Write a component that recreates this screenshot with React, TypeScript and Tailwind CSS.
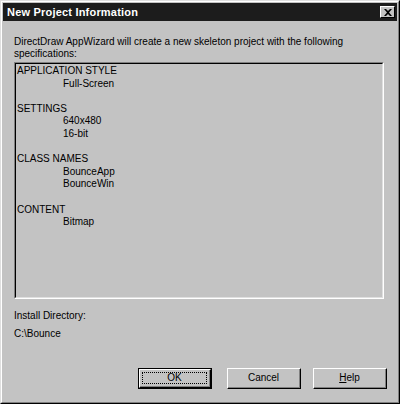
import React from 'react';

const sections = [
  { label: 'APPLICATION STYLE', items: ['Full-Screen'] },
  { label: 'SETTINGS', items: ['640x480', '16-bit'] },
  { label: 'CLASS NAMES', items: ['BounceApp', 'BounceWin'] },
  { label: 'CONTENT', items: ['Bitmap'] },
];

const Win95Button: React.FC<{ isDefault?: boolean; children: React.ReactNode }> = ({ isDefault, children }) => (
  <div className={`w-[74px] h-[21px] ${isDefault ? 'border border-black' : ''}`}>
    <div className="w-full h-full border-t border-l border-t-white border-l-white border-r border-b border-r-black border-b-black">
      <div className="relative w-full h-full border-r border-b border-r-[#808080] border-b-[#808080] flex items-center justify-center">
        {isDefault && <div className="absolute inset-[2px] border border-dotted border-black" />}
        <span>{children}</span>
      </div>
    </div>
  </div>
);

export default function App() {
  return (
    <div
      className="w-[400px] h-[404px] bg-[#c3c3c3] border-t border-l border-t-[#dfdfdf] border-l-[#dfdfdf] border-r border-b border-r-black border-b-black text-black text-[10px] leading-[12px]"
      style={{ fontFamily: '"Liberation Sans", Arial, sans-serif' }}
    >
      <div className="w-full h-full border-t border-l border-t-white border-l-white border-r border-b border-r-[#808080] border-b-[#808080] p-px flex flex-col">
        {/* Title bar */}
        <div className="h-[18px] bg-[#1c1c1c] flex items-center justify-between pl-[4px] pr-[2px]">
          <span className="text-white font-bold text-[11px] tracking-[0.2px]">New Project Information</span>
          <div className="w-[15px] h-[12px] bg-[#c3c3c3] border-t border-l border-t-white border-l-white border-r border-b border-r-black border-b-black flex items-center justify-center">
            <svg width="8" height="7" viewBox="0 0 8 7">
              <path d="M0 0h2l2 2 2-2h2L5 3.5 8 7H6L4 5 2 7H0l3-3.5z" fill="black" />
            </svg>
          </div>
        </div>

        {/* Body */}
        <div className="flex flex-col pl-[11px] pr-[10px] pt-[15px]">
          <p>
            DirectDraw AppWizard will create a new skeleton project with the following
            <br />
            specifications:
          </p>

          <div className="mt-[2px] w-[370px] h-[237px] border-t border-l border-t-[#808080] border-l-[#808080] border-r border-b border-r-white border-b-white">
            <div className="w-full h-full border-t border-l border-t-black border-l-black border-r border-b border-r-[#dfdfdf] border-b-[#dfdfdf] pl-[1px] pt-px leading-[12.6px]">
              {sections.map((s, i) => (
                <div key={s.label} className={i > 0 ? 'mt-[12.6px]' : ''}>
                  <div>{s.label}</div>
                  {s.items.map((it) => (
                    <div key={it} className="pl-[46px]">{it}</div>
                  ))}
                </div>
              ))}
            </div>
          </div>

          <div className="mt-[11px]">Install Directory:</div>
          <div className="mt-[6px]">C:\Bounce</div>

          <div className="mt-[28px] flex justify-end gap-[12px]">
            <div className="mr-[3px]">
              <Win95Button isDefault>OK</Win95Button>
            </div>
            <Win95Button>Cancel</Win95Button>
            <Win95Button>
              <span className="underline">H</span>elp
            </Win95Button>
          </div>
        </div>
      </div>
    </div>
  );
}
